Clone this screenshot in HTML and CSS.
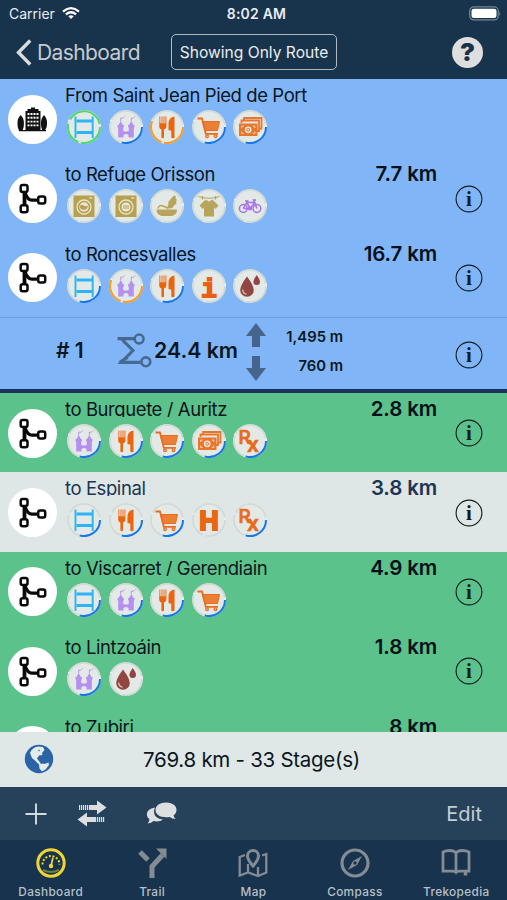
FILE: index.html
```html
<!DOCTYPE html>
<html lang="en">
<head>
    <meta charset="UTF-8">
    <meta name="viewport" content="width=device-width, initial-scale=1.0">
    <title>Dashboard</title>
    <link rel="stylesheet" href="styles.css">
</head>
<body>
    <!-- Icon sprite -->
    <svg class="sprite" width="0" height="0">
        <symbol id="disc" viewBox="0 0 34 34">
            <circle cx="17" cy="17" r="16.8" fill="#e2e9e6"/>
            <circle cx="17" cy="17" r="16" fill="none" stroke="#d2d9d3" stroke-width="1.6"/>
            <path d="M33 14.5v2.500M11.5 32.2l1.500.4M1.6 11.5l.8-1.8" stroke="#eef3f2" stroke-width="1.600"/>
        </symbol>
        <symbol id="arc-blue" viewBox="0 0 34 34"><path d="M33 17A16 16 0 0 1 12.6 32.4" fill="none" stroke="#1676ee" stroke-width="2"/></symbol>
        <symbol id="arc-orange" viewBox="0 0 34 34"><path d="M33 17A16 16 0 0 1 14 32.7M11.5 32A16 16 0 0 1 2.2 11" fill="none" stroke="#fb9b20" stroke-width="2"/></symbol>
        <symbol id="arc-green" viewBox="0 0 34 34"><path d="M33 17A16 16 0 0 1 14 32.7M11.5 32A16 16 0 0 1 1.2 14M3 9.5A16 16 0 0 1 32.7 14" fill="none" stroke="#48dc68" stroke-width="2"/></symbol>

        <symbol id="bed" viewBox="0 0 34 34"><path d="M8.5 6.5v21.500M25.700 6.5v21.500" stroke="#2bb5f4" stroke-width="1.900"/><path d="M9.500 11h15.500M9.500 22.500h15.500" stroke="#2bb5f4" stroke-width="2.900"/></symbol>
        <symbol id="castle" viewBox="0 0 34 34" fill="#b590ee">
            <path d="M8.500 17v-2h1l2.200-4 2.200 4h1v2l-.7.800v3l1.300.7h3l1.300-.7v-3l-.7-.8v-2h1l2.200-4 2.200 4h1v2l-.7.800v9.700h-5.200V25.500q-.3-1.500-2.600-1.500t-2.600 1.500v2H9.200v-9.700z"/>
            <path d="M11.700 11V8l2 .4 2-2M22.300 11V8l2 .4 2-2" fill="none" stroke="#b590ee" stroke-width=".9"/>
        </symbol>
        <symbol id="food" viewBox="0 0 34 34" fill="#ea650e">
            <path d="M9.200 13v4q0 1.500 2.200 2.500V27q0 1.200 1.300 1.200T14 27v-7.500q2.300-1 2.300-2.500v-4z"/>
            <path d="M9.800 6.500V14M12 6.500V14M14 6.500V14M15.900 6.500V14" stroke="#ee8b4c" stroke-width="1.300"/>
            <path d="M24.500 6.500q-6 1-6 7V20l2.800.8V27q0 1.200 1.600 1.200t1.600-1.200z"/>
        </symbol>
        <symbol id="cart" viewBox="0 0 34 34" fill="none" stroke="#ea6d1d">
            <path d="M10.500 11.500h17l-2 9H13z" fill="#ec7f36" stroke-width="1"/>
            <path d="M5.500 8.500H10l3.800 15.300H26" stroke-width="1.800"/>
            <circle cx="15" cy="26.200" r="1.300" stroke-width="1.300"/><circle cx="23.500" cy="26.200" r="1.300" stroke-width="1.300"/>
        </symbol>
        <symbol id="cash" viewBox="0 0 34 34" fill="none" stroke="#ea762c">
            <path d="M8.500 13v-2.500H26V21h-2M11 10V8h17.500v10.500H26" stroke-width="1.800"/>
            <rect x="6.500" y="14" width="17.500" height="11.500" fill="#ea762c" stroke-width="1"/>
            <path d="M8.700 18v-1.900h2M19.800 16.100h2V18M8.700 21.500v1.900h2M19.800 23.400h2v-1.900" stroke="#f6d6be" stroke-width="1"/>
            <circle cx="15.200" cy="19.800" r="3.400" fill="#f2e6da" stroke="none"/><circle cx="15.200" cy="19.800" r="1.400" stroke-width="1"/>
        </symbol>
        <symbol id="rx" viewBox="0 0 34 34"><g fill="#ea6a1a" stroke="#ea6a1a" stroke-width=".7"><text x="5.500" y="20" class="rx-r">R</text><text x="14" y="27.500" class="rx-x">x</text></g></symbol>
        <symbol id="hospital" viewBox="0 0 34 34"><text x="17" y="27" text-anchor="middle" class="letter-h" stroke="#ea650e" stroke-width="2" fill="#ea650e">H</text></symbol>
        <symbol id="info" viewBox="0 0 34 34"><text x="17" y="27.500" text-anchor="middle" class="mono" stroke="#ea5f10" stroke-width="1.800" fill="#ea5f10">i</text></symbol>
        <symbol id="water" viewBox="0 0 34 34" fill="#914641">
            <path d="M14 7.500q6.800 9 6.800 13.500a6.800 6.800 0 0 1-13.600 0q0-4.500 6.800-13.500z"/>
            <path d="M23.700 6q3.300 4.600 3.300 6.800a3.300 3.300 0 0 1-6.600 0q0-2.200 3.300-6.800z"/>
            <path d="M9.700 20.500q0 4 3.800 4.600" fill="none" stroke="#d7bcb5" stroke-width="1.300"/>
        </symbol>
        <symbol id="washer" viewBox="0 0 34 34" fill="none">
            <rect x="6.500" y="6.500" width="21" height="21.500" fill="#b7a050"/>
            <circle cx="17" cy="18" r="7" stroke="#e8e5c9" stroke-width="1.300"/><circle cx="17" cy="18" r="4.700" fill="#e8e7d8"/>
            <path d="M12.800 17q2-2 4-.5t4 0a4 4 0 0 1-8 .5z" fill="#b7a050"/><path d="M22 9h3.500" stroke="#e8e5c9" stroke-width="1.200"/>
        </symbol>
        <symbol id="dryer" viewBox="0 0 34 34" fill="none">
            <rect x="6.500" y="6.500" width="21" height="21.500" fill="#b7a050"/>
            <circle cx="17" cy="18" r="7" stroke="#e8e5c9" stroke-width="1.300"/><circle cx="17" cy="18" r="4.500" fill="#e8e7d8"/>
            <path d="M14 17h6M14 19h6" stroke="#b7a050" stroke-width="1"/><path d="M22 9h3.500" stroke="#e8e5c9" stroke-width="1.200"/>
        </symbol>
        <symbol id="handwash" viewBox="0 0 34 34" fill="#b9a45b">
            <path d="M6.500 20.500h20.500q0 5-5 6.500H11.500q-5-1.500-5-6.500z"/>
            <path d="M16.500 19.500q2.500-3 2-7l5.500-6 2 1-.5 2.500 1.500.5-1 2.500.5 1.500-2.500 2q-1 3-4.500 3z"/><path d="M8 19.500q1-4 5-2.500t5 2.500" fill="none" stroke="#b9a45b" stroke-width="1.500"/>
        </symbol>
        <symbol id="shirt" viewBox="0 0 34 34" fill="#b9a45b">
            <path d="M6.500 7.500Q17 11 27.500 7.500" fill="none" stroke="#b9a45b"/><path d="M10.500 7v3.500M23.500 7v3.500" stroke="#b9a45b" stroke-width="1.300"/>
            <path d="M12.500 11.500l2.500-.5q2 3 4 0l2.500.5 5 5-3 3.500-1.500-1.500V27.500H12V18.500L10.500 20l-3-3.500z"/>
        </symbol>
        <symbol id="bike" viewBox="0 0 34 34" fill="none" stroke="#a873e6" stroke-width="1.500">
            <circle cx="10.300" cy="19.500" r="3.900"/><circle cx="23.900" cy="19.500" r="3.900"/>
            <path d="M10.300 19.500l3.400-6h8l-4.500 6h-6.500M14 14l3.200 5.500M23.900 19.500L20.500 11H23M12 12h3.500"/><circle cx="17" cy="19.500" r="1.300"/>
        </symbol>

        <symbol id="branch" viewBox="0 0 49 49" fill="none" stroke="#080808" stroke-width="2.500">
            <path d="M16.500 16v17" stroke-width="3.800"/><path d="M17 18.500q2.500 7.700 7 7.700h6" stroke-width="3.200"/>
            <rect x="12.700" y="10.900" width="6.800" height="7" rx="2" fill="#fff"/><rect x="12.700" y="31.300" width="6.800" height="7" rx="2" fill="#fff"/><rect x="30.200" y="22.600" width="7" height="7" rx="2" fill="#fff"/>
        </symbol>
        <symbol id="town" viewBox="0 0 49 49" fill="#111">
            <path d="M17.500 16h2v-2h3.500v-1.500h4V14h3.500v2h2v20h-15z"/><path d="M10.500 34q-1-1-1-6t3.200-8q3.200 3 3.200 8t-1 6v2h-4zM34 34q-1-1-1-6t3-8q3 3 3 8t-1.500 6v2H34zM11 35h27v1.300H11z"/>
            <path d="M19.500 19h11.500M19.500 22.800h11.500M19.500 26.600h11.500M19.500 30.400h11.500" stroke="#fff" stroke-width="1.900" stroke-dasharray="2 1"/>
        </symbol>
        <symbol id="detail" viewBox="0 0 28 28"><circle cx="14" cy="14" r="12.900" fill="none" stroke="#111c22" stroke-width="1.100"/><text x="14" y="21" text-anchor="middle" class="serif-i">i</text></symbol>
    </svg>

    <div class="app">
        <header class="header">
            <div class="status">
                <div class="carrier">
                    <span>Carrier</span>
                    <svg width="18" height="13" viewBox="0 0 18 13" fill="none" stroke="#fff" stroke-width="2.200"><path d="M1 4.600Q9-2.200 17 4.600M3.900 7.400q5.100-4.300 10.200 0"/><path d="M6.300 9.200q2.700-2.100 5.400 0L9 12z" fill="#fff" stroke="none"/></svg>
                </div>
                <div class="time">8:02 AM</div>
                <svg class="battery" width="32" height="15" viewBox="0 0 32 15"><rect x=".7" y=".9" width="28.500" height="13" rx="4" fill="none" stroke="#778795" stroke-width="1.200"/><rect x="2.500" y="2.700" width="25" height="9.400" rx="2.300" fill="#fff"/><path d="M30.300 5q1.700 2.500 0 5z" fill="#778795"/></svg>
            </div>
            <nav class="navbar">
                <a class="back"><svg width="16" height="27" viewBox="0 0 16 27"><path d="M14.200 1.500L2.500 13.500l11.700 12" fill="none" stroke="#d9dbdb" stroke-width="3.400"/></svg><span>Dashboard</span></a>
                <button class="filter">Showing Only Route</button>
                <span class="help">?</span>
            </nav>
        </header>

        <main class="list">
            <section class="row blue">
                <svg class="avatar"><use href="#town"/></svg>
                <div class="body">
                    <div class="head"><span class="title">From Saint Jean Pied de Port</span></div>
                    <div class="services">
                        <svg><use href="#disc"/><use href="#arc-green"/><use href="#bed"/></svg>
                        <svg><use href="#disc"/><use href="#arc-blue"/><use href="#castle"/></svg>
                        <svg><use href="#disc"/><use href="#arc-orange"/><use href="#food"/></svg>
                        <svg><use href="#disc"/><use href="#arc-blue"/><use href="#cart"/></svg>
                        <svg><use href="#disc"/><use href="#arc-blue"/><use href="#cash"/></svg>
                    </div>
                </div>
                <span class="detail"></span>
            </section>
            <section class="row blue">
                <svg class="avatar"><use href="#branch"/></svg>
                <div class="body">
                    <div class="head"><span class="title">to Refuge Orisson</span><span class="km">7.7 km</span></div>
                    <div class="services">
                        <svg><use href="#disc"/><use href="#washer"/></svg>
                        <svg><use href="#disc"/><use href="#dryer"/></svg>
                        <svg><use href="#disc"/><use href="#handwash"/></svg>
                        <svg><use href="#disc"/><use href="#shirt"/></svg>
                        <svg><use href="#disc"/><use href="#bike"/></svg>
                    </div>
                </div>
                <svg class="detail"><use href="#detail"/></svg>
            </section>
            <section class="row blue">
                <svg class="avatar"><use href="#branch"/></svg>
                <div class="body">
                    <div class="head"><span class="title">to Roncesvalles</span><span class="km">16.7 km</span></div>
                    <div class="services">
                        <svg><use href="#disc"/><use href="#arc-blue"/><use href="#bed"/></svg>
                        <svg><use href="#disc"/><use href="#arc-orange"/><use href="#castle"/></svg>
                        <svg><use href="#disc"/><use href="#arc-blue"/><use href="#food"/></svg>
                        <svg><use href="#disc"/><use href="#info"/></svg>
                        <svg><use href="#disc"/><use href="#water"/></svg>
                    </div>
                </div>
                <svg class="detail"><use href="#detail"/></svg>
            </section>

            <section class="stage">
                <span class="stage-no"># 1</span>
                <svg class="sigma" viewBox="0 0 34 34" fill="none" stroke="#47688f" stroke-width="3"><path d="M17 5.500H4l11.500 11.500L4 28.500h19M.5 5.500h5l2 4M2.500 28.500l8-5"/><circle cx="21.500" cy="5.800" r="4.300" stroke-width="2.500"/><circle cx="28" cy="28" r="4.300" stroke-width="2.500"/></svg>
                <span class="stage-km">24.4 km</span>
                <svg class="updown" viewBox="0 0 20 58" fill="#46648b"><path d="M10 0l10 13h-6v11H6V13H0zM10 58l10-13h-6V33H6v12H0z"/></svg>
                <div class="climb"><span>1,495 m</span><span>760 m</span></div>
                <svg class="detail"><use href="#detail"/></svg>
            </section>

            <section class="row green">
                <svg class="avatar"><use href="#branch"/></svg>
                <div class="body">
                    <div class="head"><span class="title">to Burguete / Auritz</span><span class="km">2.8 km</span></div>
                    <div class="services">
                        <svg><use href="#disc"/><use href="#arc-blue"/><use href="#castle"/></svg>
                        <svg><use href="#disc"/><use href="#arc-blue"/><use href="#food"/></svg>
                        <svg><use href="#disc"/><use href="#arc-blue"/><use href="#cart"/></svg>
                        <svg><use href="#disc"/><use href="#arc-blue"/><use href="#cash"/></svg>
                        <svg><use href="#disc"/><use href="#arc-blue"/><use href="#rx"/></svg>
                    </div>
                </div>
                <svg class="detail"><use href="#detail"/></svg>
            </section>
            <section class="row light">
                <svg class="avatar"><use href="#branch"/></svg>
                <div class="body">
                    <div class="head"><span class="title">to Espinal</span><span class="km">3.8 km</span></div>
                    <div class="services">
                        <svg><use href="#disc"/><use href="#arc-blue"/><use href="#bed"/></svg>
                        <svg><use href="#disc"/><use href="#arc-blue"/><use href="#food"/></svg>
                        <svg><use href="#disc"/><use href="#arc-blue"/><use href="#cart"/></svg>
                        <svg><use href="#disc"/><use href="#hospital"/></svg>
                        <svg><use href="#disc"/><use href="#arc-blue"/><use href="#rx"/></svg>
                    </div>
                </div>
                <svg class="detail"><use href="#detail"/></svg>
            </section>
            <section class="row green">
                <svg class="avatar"><use href="#branch"/></svg>
                <div class="body">
                    <div class="head"><span class="title">to Viscarret / Gerendiain</span><span class="km">4.9 km</span></div>
                    <div class="services">
                        <svg><use href="#disc"/><use href="#arc-blue"/><use href="#bed"/></svg>
                        <svg><use href="#disc"/><use href="#arc-blue"/><use href="#castle"/></svg>
                        <svg><use href="#disc"/><use href="#arc-blue"/><use href="#food"/></svg>
                        <svg><use href="#disc"/><use href="#arc-blue"/><use href="#cart"/></svg>
                    </div>
                </div>
                <svg class="detail"><use href="#detail"/></svg>
            </section>
            <section class="row green">
                <svg class="avatar"><use href="#branch"/></svg>
                <div class="body">
                    <div class="head"><span class="title">to Lintzoáin</span><span class="km">1.8 km</span></div>
                    <div class="services">
                        <svg><use href="#disc"/><use href="#arc-blue"/><use href="#castle"/></svg>
                        <svg><use href="#disc"/><use href="#water"/></svg>
                    </div>
                </div>
                <svg class="detail"><use href="#detail"/></svg>
            </section>
            <section class="row green">
                <svg class="avatar"><use href="#branch"/></svg>
                <div class="body">
                    <div class="head"><span class="title">to Zubiri</span><span class="km">8 km</span></div>
                </div>
                <span class="detail"></span>
            </section>
        </main>

        <div class="summary">
            <svg class="globe" viewBox="0 0 30 30"><circle cx="15" cy="15" r="14.200" fill="#2a64a6"/><path d="M6 9Q8 3.500 14 2.500l5 .5 1.500 3-2.500 3 .5 2-3.500.5-2 3 2 2.500 2 3-2 .5-3-3-4-3.500zM15 20.500l4-1 1.500.5 4-1.500.5 2.500-3.500 4.500-3.500 2-2.500-3z" fill="#e3ebeb"/><circle cx="15" cy="6.500" r=".8" fill="#2a64a6"/></svg>
            <span>769.8 km - 33 Stage(s)</span>
        </div>

        <div class="toolbar">
            <svg class="plus" viewBox="0 0 22 22" stroke="#d6dbe0" stroke-width="1.900"><path d="M11 .5v21M.5 11h21"/></svg>
            <svg class="swap" viewBox="0 0 30 27" fill="#dcdedf"><path d="M12 5h8V.5l9.500 7-9.500 7V10h-8zM18 17h-8v-4.500l-9.500 7 9.500 7V22h8z"/><path d="M2 7.500h10M18 19.500h10" stroke="#dcdedf" stroke-width="5" stroke-dasharray="1.200 .8"/></svg>
            <svg class="chat" viewBox="0 0 31 23" fill="#dcdedf"><path d="M9 5.500Q.8 7 .8 12.500q0 3 2.700 5-.3 2-2 4 4-.3 6-2.400 6 1.300 9.500-1.600Q8.500 17 8 10q0-2.500 1-4.500z"/><path d="M20 .5c6 0 10.500 3 10.500 7.300 0 2.500-1 4.200-3 5.600q.5 2 2.300 3.600-4 0-6-2.100C16 16.200 9.500 13.500 9.500 8 9.500 3.500 14 .5 20 .5z"/></svg>
            <span class="edit">Edit</span>
        </div>

        <nav class="tabs">
            <a class="tab active">
                <svg viewBox="0 0 30 30" fill="none"><circle cx="15" cy="15" r="13.200" stroke="#efd435" stroke-width="3"/><path d="M6.500 16.500A8.500 8.500 0 0 1 23.500 16.500" stroke="#efd435" stroke-width="2" stroke-dasharray="2 1.700"/><path d="M15 18L17 9.500" stroke="#efd435" stroke-width="1.700"/><circle cx="15" cy="18" r="2.200" fill="#efd435"/><path d="M7 22q8 4 16 0" stroke="#71813a" stroke-width="2"/></svg>
                <span>Dashboard</span>
            </a>
            <a class="tab">
                <svg viewBox="0 0 30 30" fill="none" stroke="#858b92" stroke-width="5"><path d="M15 30V18.500L25.500 7M3 4l8 8"/><path d="M19 .5h10.500V11z" fill="#858b92" stroke="none"/></svg>
                <span>Trail</span>
            </a>
            <a class="tab">
                <svg viewBox="0 0 30 30" fill="none" stroke="#858b92" stroke-width="2.300"><path d="M7 7L1.700 9v18.500L10 24.500l10 3.500 8.300-3.500V6L24 7.500M10 16v8.500M20 19v9"/><path d="M15 18q-5.500-6.500-5.500-10a5.500 5.500 0 0 1 11 0q0 3.500-5.500 10z" stroke-width="3"/></svg>
                <span>Map</span>
            </a>
            <a class="tab">
                <svg viewBox="0 0 30 30"><circle cx="15" cy="15" r="13" fill="none" stroke="#858b92" stroke-width="3.200"/><path d="M22 8l-5 9-9 5 5-9z" fill="#858b92"/><circle cx="15" cy="15" r="1.700" fill="#18344d"/></svg>
                <span>Compass</span>
            </a>
            <a class="tab">
                <svg viewBox="0 0 30 30" fill="none" stroke="#858b92" stroke-width="2.800"><path d="M15 5Q13 2.500 9 2.500T2 4V23.200H12q2 0 3 1.300 1-1.300 3-1.300h10V4Q25 2.500 21 2.500T15 5zV24"/><path d="M24.500 23v4.500" stroke-width="3.500"/></svg>
                <span>Trekopedia</span>
            </a>
        </nav>
    </div>
</body>
</html>
```
FILE: styles.css
```css
* {
    box-sizing: border-box;
}
body {
    margin: 0;
    font-family: Inter, "Liberation Sans", sans-serif;
    color: #0b1620;
}
.sprite {
    display: none;
}
.app {
    width: 507px;
    height: 900px;
    display: flex;
    flex-direction: column;
    overflow: hidden;
    background: #18344c;
}
svg {
    flex: none;
}

/* Header */
.header {
    height: 79px;
    flex: none;
    color: #e9edf0;
}
.status {
    height: 27px;
    display: grid;
    grid-template-columns: 1fr auto 1fr;
    align-items: center;
    padding: 0 6px 0 9px;
}
.carrier {
    display: flex;
    align-items: center;
    gap: 7px;
    font-size: 14px;
}
.time {
    padding-left: 3px;
    font-size: 14px;
    font-weight: 600;
    letter-spacing: 0.2px;
}
.battery {
    justify-self: end;
}
.navbar {
    height: 50px;
    display: flex;
    align-items: center;
    padding: 0 24px 0 16px;
}
.back {
    width: 155px;
    display: flex;
    align-items: center;
    gap: 5px;
    color: #c6cbcf;
    font-size: 21px;
    letter-spacing: -0.6px;
}
.filter {
    width: 166px;
    height: 36px;
    padding: 0;
    border: 1.5px solid #b1bac2;
    border-radius: 5px;
    background: none;
    color: #e9edf0;
    font-family: inherit;
    font-size: 15.6px;
    white-space: nowrap;
}
.help {
    width: 31px;
    height: 31px;
    margin-left: auto;
    border-radius: 50%;
    background: #dedede;
    color: #18344c;
    font-size: 25px;
    font-weight: 900;
    line-height: 31px;
    text-align: center;
}

/* Route list */
.list {
    height: 653px;
    flex: none;
    overflow: hidden;
}
.row {
    height: 79.4px;
    display: flex;
    align-items: center;
    padding: 1px 24px 0 8px;
}
.blue {
    background: #80b6f8;
}
.green {
    background: #5cc28b;
}
.light {
    background: #dfe6e6;
}
.light .title,
.light .km {
    color: #1b3552;
}
.avatar {
    width: 49px;
    height: 49px;
    border-radius: 50%;
    background: #fff;
}
.body {
    flex: 1;
    align-self: stretch;
    padding-left: 8px;
}
.head {
    height: 23px;
    display: flex;
    justify-content: space-between;
    line-height: 30px;
    white-space: nowrap;
}
.title {
    height: 23px;
    overflow: hidden;
    font-size: 18.5px;
    letter-spacing: -0.42px;
}
.km {
    margin-left: auto;
    font-size: 20.5px;
    font-weight: 600;
    letter-spacing: -0.15px;
    color: #06101a;
}
.services {
    display: flex;
    gap: 7.5px;
    padding: 7px 0 0 2px;
}
.services svg {
    width: 34px;
    height: 34px;
}
.detail {
    width: 28px;
    height: 28px;
    margin-left: 18px;
}
.rx-r {
    font: 500 19px Inter, sans-serif;
}
.rx-x {
    font: 600 21px Inter, sans-serif;
}
.letter-h {
    font: bold 27px "Liberation Sans", sans-serif;
}
.mono {
    font: bold 26px "Liberation Mono", monospace;
}
.serif-i {
    font: bold 21px "Liberation Serif", serif;
    fill: #111c22;
}

/* Stage totals */
.stage {
    height: 75.8px;
    display: flex;
    align-items: center;
    padding: 2px 24px 0 56px;
    border-top: 1px solid #6d9fdf;
    border-bottom: 4px solid #1b3358;
    background: #80b6f8;
    font-weight: 600;
    white-space: nowrap;
}
.stage-no {
    width: 61px;
    font-size: 21px;
    margin-top: -9px;
}
.sigma {
    width: 35px;
    height: 35px;
    margin-top: -9px;
}
.stage-km {
    width: 92px;
    margin: -10px 0 0 2px;
    font-size: 21.3px;
}
.updown {
    width: 20px;
    height: 58px;
    margin-top: -6px;
}
.climb {
    width: 77px;
    display: flex;
    flex-direction: column;
    gap: 11px;
    margin-top: -7px;
    font-size: 14.8px;
    line-height: 18px;
    text-align: right;
}
.stage .detail {
    margin-left: auto;
}

/* Bottom bars */
.summary {
    height: 55px;
    flex: none;
    display: flex;
    align-items: center;
    padding-left: 24px;
    background: #dfe8e7;
    font-size: 20.5px;
    letter-spacing: -0.28px;
}
.globe {
    width: 30px;
    height: 30px;
    margin: -2px 89px 0 0;
}
.toolbar {
    height: 53px;
    flex: none;
    display: flex;
    align-items: center;
    padding: 0 25px;
    background: #26425b;
}
.plus {
    width: 22px;
    height: 22px;
}
.swap {
    width: 30px;
    height: 27px;
    margin-left: 30px;
}
.chat {
    width: 31px;
    height: 23px;
    margin-left: 39px;
}
.edit {
    margin-left: auto;
    color: #c5ccd3;
    font-size: 20px;
}
.tabs {
    height: 60px;
    flex: none;
    display: grid;
    grid-template-columns: repeat(5, 1fr);
    background: #17334d;
}
.tab {
    display: flex;
    flex-direction: column;
    align-items: center;
    padding-top: 8px;
    color: #b7c1c9;
    font-size: 11.8px;
    font-weight: 500;
    letter-spacing: 0.35px;
    line-height: 14px;
}
.tab svg {
    width: 30px;
    height: 30px;
    margin-bottom: 7px;
}
```
